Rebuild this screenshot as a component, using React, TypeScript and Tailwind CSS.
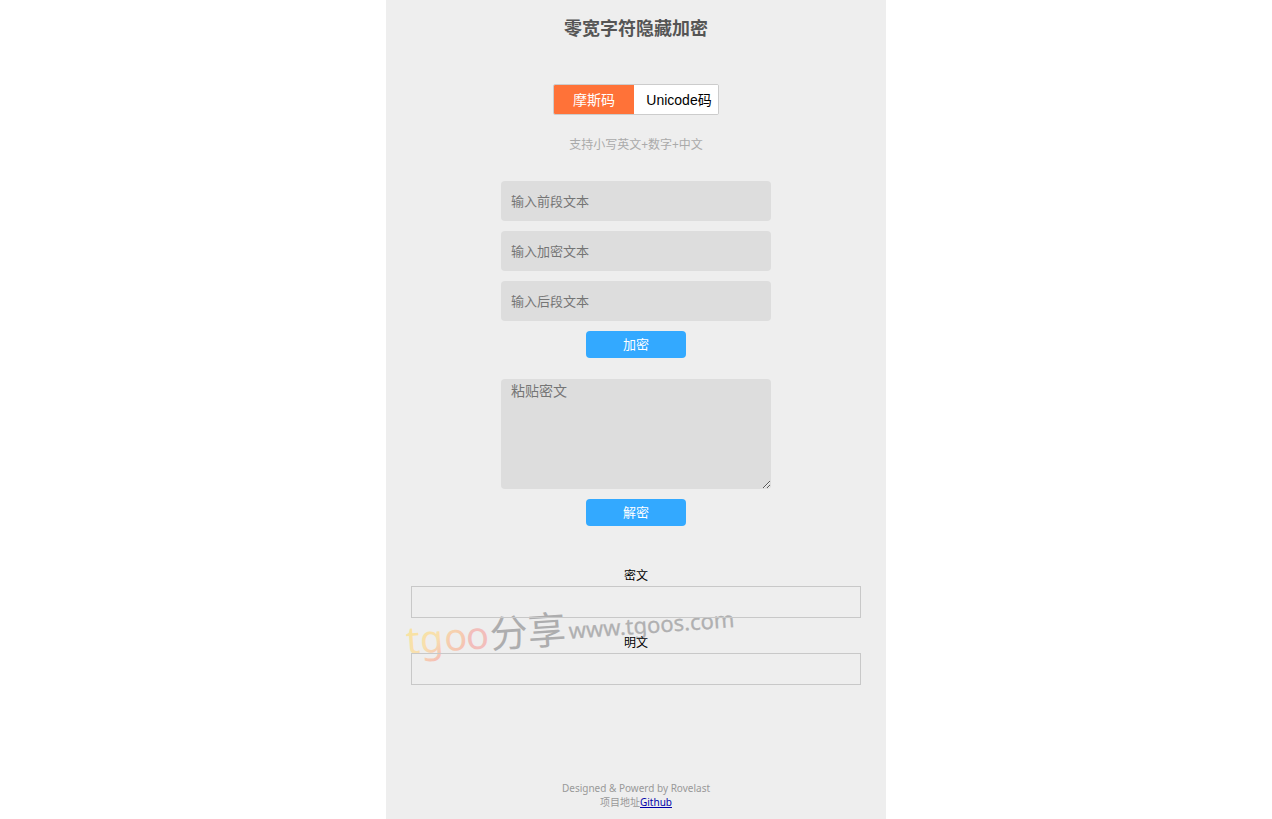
import { useState } from "react"
import clsx from "clsx"

type Mode = "morse" | "unicode"

const modes: { id: Mode; label: string; width: string }[] = [
  { id: "morse", label: "摩斯码", width: "w-20" },
  { id: "unicode", label: "Unicode码", width: "w-[84px] pl-[6px]" },
]

const fields = [
  { id: "before", placeholder: "输入前段文本" },
  { id: "secret", placeholder: "输入加密文本" },
  { id: "after", placeholder: "输入后段文本" },
]

function ActionButton({ children }: { children: string }) {
  return (
    <button type="button" className="h-[27px] w-[100px] rounded bg-[#33a9ff] text-[13px] text-white">
      {children}
    </button>
  )
}

function Result({ id, label }: { id: string; label: string }) {
  return (
    <div>
      <label htmlFor={id} className="block h-5 text-center text-xs leading-5 text-black">
        {label}
      </label>
      <output id={id} className="block h-8 w-full border border-[#c8c8c8]" />
    </div>
  )
}

function Watermark() {
  return (
    <svg
      viewBox="0 0 400 80"
      aria-hidden="true"
      className="pointer-events-none absolute -left-2 top-10 -z-10 h-20 w-[400px] overflow-visible font-['Noto_Sans','Noto_Sans_CJK_SC',sans-serif]"
    >
      <defs>
        <linearGradient id="warm" gradientUnits="userSpaceOnUse" x1="8" y1="20" x2="30" y2="58">
          <stop offset="0" stopColor="#f8e3a0" />
          <stop offset="0.6" stopColor="#f8dfae" />
          <stop offset="1" stopColor="#f5c0b4" />
        </linearGradient>
        <linearGradient id="peach" x1="0" y1="0" x2="0.4" y2="1">
          <stop offset="0.3" stopColor="#f7d8ac" />
          <stop offset="1" stopColor="#f4c0b4" />
        </linearGradient>
      </defs>
      <g transform="rotate(-4 4 48)">
        <text x="4" y="48" fontSize="38" fill="url(#warm)">tg</text>
        <text x="42" y="48" fontSize="38" fill="url(#peach)">o</text>
        <text x="64" y="48" fontSize="38" fill="#f2bebb">o</text>
        <text x="88" y="48" fontSize="38" fill="#adadae">分享</text>
        <text x="167" y="44" fontSize="22" fill="#b0b0b1" stroke="#b0b0b1" strokeWidth="0.3">
          www.tgoos.com
        </text>
      </g>
    </svg>
  )
}

export default function App() {
  const [mode, setMode] = useState<Mode>("morse")

  return (
    <div className="min-h-screen bg-white font-['Liberation_Sans','Noto_Sans_CJK_SC',sans-serif]">
      <div className="mx-auto flex min-h-screen max-w-[500px] flex-col bg-[#eee] px-[25px]">
        <h1 className="pt-[15px] text-center text-lg leading-7 font-bold text-[#555]">零宽字符隐藏加密</h1>

        <main className="flex flex-1 flex-col items-center">
          <div className="mt-[41px] flex h-[31px] overflow-hidden rounded-xs border border-[#ccc] bg-white">
            {modes.map((m) => (
              <button
                key={m.id}
                type="button"
                aria-pressed={mode === m.id}
                onClick={() => setMode(m.id)}
                className={clsx(
                  "text-sm whitespace-nowrap",
                  m.width,
                  mode === m.id ? "bg-[#ff7238] text-white" : "bg-white text-black",
                )}
              >
                {m.label}
              </button>
            ))}
          </div>
          <p className="mt-5 font-['Noto_Sans','Noto_Sans_CJK_SC',sans-serif] text-xs leading-5 text-[#aaa]">
            支持小写英文+数字+中文
          </p>

          <form className="mt-[26px] flex flex-col items-center gap-[10px]">
            {fields.map((f) => (
              <input
                key={f.id}
                id={f.id}
                type="text"
                aria-label={f.placeholder}
                placeholder={f.placeholder}
                className="h-10 w-[270px] rounded bg-[#ddd] px-[10px] text-[13px] placeholder:text-[#757575]"
              />
            ))}
            <ActionButton>加密</ActionButton>
          </form>

          <form className="mt-[21px] flex flex-col items-center gap-[10px]">
            <textarea
              aria-label="粘贴密文"
              placeholder="粘贴密文"
              className="block h-[110px] w-[270px] resize rounded bg-[#ddd] px-[10px] py-[2px] text-sm placeholder:text-[#757575]"
            />
            <ActionButton>解密</ActionButton>
          </form>

          <section className="relative isolate mt-10 flex w-full flex-col gap-[15px]">
            <Watermark />
            <Result id="cipher" label="密文" />
            <Result id="plain" label="明文" />
          </section>
        </main>

        <footer className="pt-10 pb-[10px] text-center font-['Noto_Sans','Noto_Sans_CJK_SC',sans-serif] text-[10px] leading-[14px] text-[#999]">
          <p>Designed &amp; Powerd by Rovelast</p>
          <p>
            项目地址
            <a href="#github" className="text-[#0000aa] underline">
              Github
            </a>
          </p>
        </footer>
      </div>
    </div>
  )
}
